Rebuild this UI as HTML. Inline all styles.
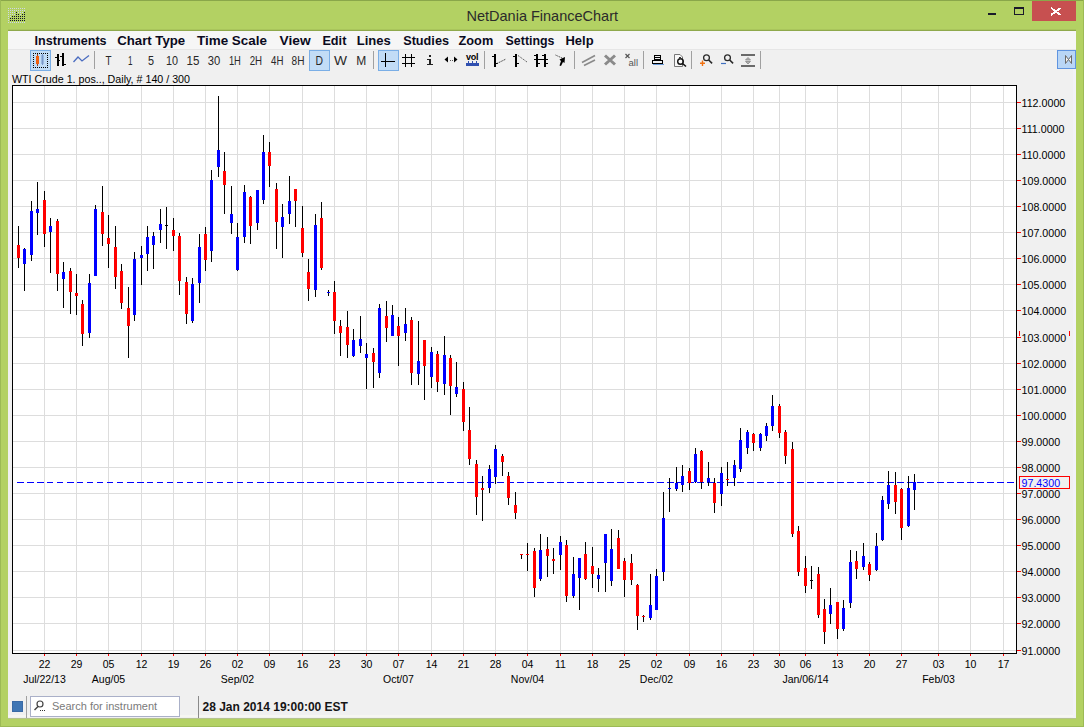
<!DOCTYPE html>
<html><head><meta charset="utf-8"><style>
*{margin:0;padding:0}
html,body{width:1084px;height:727px;overflow:hidden;background:#b3d163}
svg{position:absolute;left:0;top:0;font-family:"Liberation Sans",sans-serif}
</style></head><body>
<svg width="1084" height="727" viewBox="0 0 1084 727">
<g shape-rendering="crispEdges">
<rect x="0" y="0" width="1084" height="727" fill="#b3d163"/>
<rect x="0" y="0" width="1084" height="1" fill="#8aa74a"/>
<rect x="0" y="0" width="1" height="727" fill="#9cba55"/>
<rect x="1083" y="0" width="1" height="727" fill="#9cba55"/>
<rect x="0" y="726" width="1084" height="1" fill="#9cba55"/>
<rect x="8" y="31" width="1068" height="688" fill="#f0f0f0"/>
<rect x="8" y="30" width="1068" height="1" fill="#8fa94c"/>
<rect x="8" y="29" width="1068" height="1" fill="#a9c55c"/>
<rect x="8" y="31" width="1068" height="1" fill="#eef5e0"/>
<rect x="8" y="715" width="1068" height="2" fill="#f6f6f2"/>
<rect x="8" y="718" width="1068" height="1" fill="#b5c28f"/>
<rect x="8" y="31" width="1068" height="18" fill="#f6f6f6"/>
<rect x="8" y="49" width="1068" height="1" fill="#e6e6e6"/>
<rect x="12" y="85" width="1005" height="569" fill="#ffffff"/>
<rect x="13" y="102" width="1003" height="1" fill="#dddddd"/>
<rect x="13" y="128" width="1003" height="1" fill="#dddddd"/>
<rect x="13" y="154" width="1003" height="1" fill="#dddddd"/>
<rect x="13" y="180" width="1003" height="1" fill="#dddddd"/>
<rect x="13" y="206" width="1003" height="1" fill="#dddddd"/>
<rect x="13" y="232" width="1003" height="1" fill="#dddddd"/>
<rect x="13" y="258" width="1003" height="1" fill="#dddddd"/>
<rect x="13" y="284" width="1003" height="1" fill="#dddddd"/>
<rect x="13" y="310" width="1003" height="1" fill="#dddddd"/>
<rect x="13" y="337" width="1003" height="1" fill="#dddddd"/>
<rect x="13" y="363" width="1003" height="1" fill="#dddddd"/>
<rect x="13" y="389" width="1003" height="1" fill="#dddddd"/>
<rect x="13" y="415" width="1003" height="1" fill="#dddddd"/>
<rect x="13" y="441" width="1003" height="1" fill="#dddddd"/>
<rect x="13" y="467" width="1003" height="1" fill="#dddddd"/>
<rect x="13" y="493" width="1003" height="1" fill="#dddddd"/>
<rect x="13" y="519" width="1003" height="1" fill="#dddddd"/>
<rect x="13" y="545" width="1003" height="1" fill="#dddddd"/>
<rect x="13" y="571" width="1003" height="1" fill="#dddddd"/>
<rect x="13" y="597" width="1003" height="1" fill="#dddddd"/>
<rect x="13" y="623" width="1003" height="1" fill="#dddddd"/>
<rect x="13" y="650" width="1003" height="1" fill="#dddddd"/>
<rect x="44" y="86" width="1" height="567" fill="#dddddd"/>
<rect x="76" y="86" width="1" height="567" fill="#dddddd"/>
<rect x="108" y="86" width="1" height="567" fill="#dddddd"/>
<rect x="141" y="86" width="1" height="567" fill="#dddddd"/>
<rect x="173" y="86" width="1" height="567" fill="#dddddd"/>
<rect x="205" y="86" width="1" height="567" fill="#dddddd"/>
<rect x="237" y="86" width="1" height="567" fill="#dddddd"/>
<rect x="269" y="86" width="1" height="567" fill="#dddddd"/>
<rect x="302" y="86" width="1" height="567" fill="#dddddd"/>
<rect x="334" y="86" width="1" height="567" fill="#dddddd"/>
<rect x="366" y="86" width="1" height="567" fill="#dddddd"/>
<rect x="398" y="86" width="1" height="567" fill="#dddddd"/>
<rect x="431" y="86" width="1" height="567" fill="#dddddd"/>
<rect x="463" y="86" width="1" height="567" fill="#dddddd"/>
<rect x="495" y="86" width="1" height="567" fill="#dddddd"/>
<rect x="527" y="86" width="1" height="567" fill="#dddddd"/>
<rect x="560" y="86" width="1" height="567" fill="#dddddd"/>
<rect x="592" y="86" width="1" height="567" fill="#dddddd"/>
<rect x="624" y="86" width="1" height="567" fill="#dddddd"/>
<rect x="656" y="86" width="1" height="567" fill="#dddddd"/>
<rect x="689" y="86" width="1" height="567" fill="#dddddd"/>
<rect x="721" y="86" width="1" height="567" fill="#dddddd"/>
<rect x="753" y="86" width="1" height="567" fill="#dddddd"/>
<rect x="779" y="86" width="1" height="567" fill="#dddddd"/>
<rect x="805" y="86" width="1" height="567" fill="#dddddd"/>
<rect x="837" y="86" width="1" height="567" fill="#dddddd"/>
<rect x="869" y="86" width="1" height="567" fill="#dddddd"/>
<rect x="901" y="86" width="1" height="567" fill="#dddddd"/>
<rect x="938" y="86" width="1" height="567" fill="#dddddd"/>
<rect x="970" y="86" width="1" height="567" fill="#dddddd"/>
<rect x="1003" y="86" width="1" height="567" fill="#dddddd"/>
<rect x="12" y="85" width="1005" height="1" fill="#000"/>
<rect x="12" y="653" width="1005" height="1" fill="#000"/>
<rect x="12" y="85" width="1" height="569" fill="#000"/>
<rect x="1016" y="85" width="1" height="569" fill="#000"/>
<line x1="17" y1="482.5" x2="1016" y2="482.5" stroke="#0000ff" stroke-width="1" stroke-dasharray="6.5,3.5"/>
<rect x="18" y="226" width="1" height="42" fill="#000"/>
<rect x="17" y="245" width="3" height="13" fill="#ff0000"/>
<rect x="24" y="248" width="1" height="43" fill="#000"/>
<rect x="23" y="249" width="3" height="15" fill="#0000ff"/>
<rect x="31" y="201" width="1" height="60" fill="#000"/>
<rect x="30" y="211" width="3" height="44" fill="#0000ff"/>
<rect x="37" y="182" width="1" height="53" fill="#000"/>
<rect x="36" y="209" width="3" height="4" fill="#0000ff"/>
<rect x="44" y="191" width="1" height="56" fill="#000"/>
<rect x="43" y="200" width="3" height="34" fill="#ff0000"/>
<rect x="50" y="218" width="1" height="55" fill="#000"/>
<rect x="49" y="226" width="3" height="6" fill="#0000ff"/>
<rect x="57" y="219" width="1" height="72" fill="#000"/>
<rect x="56" y="221" width="3" height="53" fill="#ff0000"/>
<rect x="63" y="262" width="1" height="46" fill="#000"/>
<rect x="62" y="272" width="3" height="7" fill="#0000ff"/>
<rect x="70" y="268" width="1" height="46" fill="#000"/>
<rect x="69" y="271" width="3" height="21" fill="#ff0000"/>
<rect x="76" y="274" width="1" height="41" fill="#000"/>
<rect x="75" y="293" width="3" height="3" fill="#ff0000"/>
<rect x="82" y="300" width="1" height="46" fill="#000"/>
<rect x="81" y="304" width="3" height="30" fill="#ff0000"/>
<rect x="89" y="274" width="1" height="64" fill="#000"/>
<rect x="88" y="283" width="3" height="50" fill="#0000ff"/>
<rect x="95" y="205" width="1" height="71" fill="#000"/>
<rect x="94" y="209" width="3" height="67" fill="#0000ff"/>
<rect x="102" y="186" width="1" height="60" fill="#000"/>
<rect x="101" y="212" width="3" height="22" fill="#ff0000"/>
<rect x="108" y="215" width="1" height="53" fill="#000"/>
<rect x="107" y="238" width="3" height="6" fill="#ff0000"/>
<rect x="115" y="226" width="1" height="63" fill="#000"/>
<rect x="114" y="247" width="3" height="30" fill="#ff0000"/>
<rect x="121" y="264" width="1" height="45" fill="#000"/>
<rect x="120" y="271" width="3" height="32" fill="#ff0000"/>
<rect x="128" y="287" width="1" height="71" fill="#000"/>
<rect x="127" y="308" width="3" height="18" fill="#ff0000"/>
<rect x="134" y="252" width="1" height="69" fill="#000"/>
<rect x="133" y="259" width="3" height="56" fill="#0000ff"/>
<rect x="141" y="246" width="1" height="39" fill="#000"/>
<rect x="140" y="255" width="3" height="3" fill="#0000ff"/>
<rect x="147" y="226" width="1" height="45" fill="#000"/>
<rect x="146" y="237" width="3" height="17" fill="#0000ff"/>
<rect x="153" y="232" width="1" height="37" fill="#000"/>
<rect x="152" y="236" width="3" height="9" fill="#0000ff"/>
<rect x="160" y="209" width="1" height="34" fill="#000"/>
<rect x="159" y="224" width="3" height="6" fill="#0000ff"/>
<rect x="166" y="207" width="1" height="42" fill="#000"/>
<rect x="165" y="225" width="3" height="1" fill="#000000"/>
<rect x="173" y="218" width="1" height="33" fill="#000"/>
<rect x="172" y="230" width="3" height="6" fill="#ff0000"/>
<rect x="179" y="233" width="1" height="62" fill="#000"/>
<rect x="178" y="236" width="3" height="45" fill="#ff0000"/>
<rect x="186" y="277" width="1" height="47" fill="#000"/>
<rect x="185" y="282" width="3" height="32" fill="#ff0000"/>
<rect x="192" y="278" width="1" height="45" fill="#000"/>
<rect x="191" y="284" width="3" height="37" fill="#0000ff"/>
<rect x="199" y="234" width="1" height="69" fill="#000"/>
<rect x="198" y="247" width="3" height="36" fill="#0000ff"/>
<rect x="205" y="227" width="1" height="44" fill="#000"/>
<rect x="204" y="234" width="3" height="26" fill="#ff0000"/>
<rect x="211" y="170" width="1" height="92" fill="#000"/>
<rect x="210" y="180" width="3" height="71" fill="#0000ff"/>
<rect x="218" y="96" width="1" height="81" fill="#000"/>
<rect x="217" y="150" width="3" height="17" fill="#0000ff"/>
<rect x="224" y="152" width="1" height="62" fill="#000"/>
<rect x="223" y="171" width="3" height="14" fill="#ff0000"/>
<rect x="231" y="186" width="1" height="48" fill="#000"/>
<rect x="230" y="214" width="3" height="9" fill="#0000ff"/>
<rect x="237" y="223" width="1" height="48" fill="#000"/>
<rect x="236" y="237" width="3" height="33" fill="#0000ff"/>
<rect x="244" y="185" width="1" height="58" fill="#000"/>
<rect x="243" y="192" width="3" height="45" fill="#0000ff"/>
<rect x="250" y="196" width="1" height="48" fill="#000"/>
<rect x="249" y="197" width="3" height="29" fill="#ff0000"/>
<rect x="257" y="190" width="1" height="40" fill="#000"/>
<rect x="256" y="190" width="3" height="33" fill="#0000ff"/>
<rect x="263" y="135" width="1" height="69" fill="#000"/>
<rect x="262" y="152" width="3" height="48" fill="#0000ff"/>
<rect x="269" y="142" width="1" height="45" fill="#000"/>
<rect x="268" y="152" width="3" height="14" fill="#ff0000"/>
<rect x="276" y="183" width="1" height="66" fill="#000"/>
<rect x="275" y="189" width="3" height="33" fill="#ff0000"/>
<rect x="282" y="204" width="1" height="54" fill="#000"/>
<rect x="281" y="217" width="3" height="10" fill="#0000ff"/>
<rect x="289" y="176" width="1" height="48" fill="#000"/>
<rect x="288" y="201" width="3" height="13" fill="#0000ff"/>
<rect x="295" y="189" width="1" height="38" fill="#000"/>
<rect x="294" y="189" width="3" height="12" fill="#ff0000"/>
<rect x="302" y="206" width="1" height="51" fill="#000"/>
<rect x="301" y="228" width="3" height="25" fill="#ff0000"/>
<rect x="308" y="259" width="1" height="42" fill="#000"/>
<rect x="307" y="272" width="3" height="17" fill="#ff0000"/>
<rect x="315" y="214" width="1" height="83" fill="#000"/>
<rect x="314" y="225" width="3" height="65" fill="#0000ff"/>
<rect x="321" y="202" width="1" height="68" fill="#000"/>
<rect x="320" y="218" width="3" height="50" fill="#ff0000"/>
<rect x="328" y="290" width="1" height="6" fill="#000"/>
<rect x="327" y="292" width="3" height="1" fill="#0000ff"/>
<rect x="334" y="281" width="1" height="53" fill="#000"/>
<rect x="333" y="292" width="3" height="29" fill="#ff0000"/>
<rect x="340" y="320" width="1" height="36" fill="#000"/>
<rect x="339" y="326" width="3" height="7" fill="#ff0000"/>
<rect x="347" y="311" width="1" height="47" fill="#000"/>
<rect x="346" y="327" width="3" height="18" fill="#ff0000"/>
<rect x="353" y="329" width="1" height="28" fill="#000"/>
<rect x="352" y="340" width="3" height="16" fill="#0000ff"/>
<rect x="360" y="316" width="1" height="37" fill="#000"/>
<rect x="359" y="339" width="3" height="7" fill="#0000ff"/>
<rect x="366" y="343" width="1" height="46" fill="#000"/>
<rect x="365" y="354" width="3" height="4" fill="#0000ff"/>
<rect x="373" y="348" width="1" height="40" fill="#000"/>
<rect x="372" y="353" width="3" height="9" fill="#ff0000"/>
<rect x="379" y="304" width="1" height="74" fill="#000"/>
<rect x="378" y="308" width="3" height="65" fill="#0000ff"/>
<rect x="386" y="301" width="1" height="41" fill="#000"/>
<rect x="385" y="316" width="3" height="12" fill="#ff0000"/>
<rect x="392" y="305" width="1" height="31" fill="#000"/>
<rect x="391" y="315" width="3" height="21" fill="#0000ff"/>
<rect x="398" y="317" width="1" height="49" fill="#000"/>
<rect x="397" y="326" width="3" height="10" fill="#ff0000"/>
<rect x="405" y="308" width="1" height="33" fill="#000"/>
<rect x="404" y="324" width="3" height="9" fill="#0000ff"/>
<rect x="411" y="317" width="1" height="68" fill="#000"/>
<rect x="410" y="320" width="3" height="53" fill="#ff0000"/>
<rect x="418" y="321" width="1" height="64" fill="#000"/>
<rect x="417" y="361" width="3" height="13" fill="#0000ff"/>
<rect x="424" y="340" width="1" height="60" fill="#000"/>
<rect x="423" y="340" width="3" height="26" fill="#ff0000"/>
<rect x="431" y="347" width="1" height="41" fill="#000"/>
<rect x="430" y="352" width="3" height="25" fill="#0000ff"/>
<rect x="437" y="351" width="1" height="41" fill="#000"/>
<rect x="436" y="354" width="3" height="28" fill="#ff0000"/>
<rect x="444" y="336" width="1" height="59" fill="#000"/>
<rect x="443" y="355" width="3" height="29" fill="#0000ff"/>
<rect x="450" y="355" width="1" height="60" fill="#000"/>
<rect x="449" y="358" width="3" height="28" fill="#ff0000"/>
<rect x="456" y="362" width="1" height="35" fill="#000"/>
<rect x="455" y="387" width="3" height="7" fill="#0000ff"/>
<rect x="463" y="382" width="1" height="49" fill="#000"/>
<rect x="462" y="389" width="3" height="33" fill="#ff0000"/>
<rect x="469" y="407" width="1" height="58" fill="#000"/>
<rect x="468" y="430" width="3" height="29" fill="#ff0000"/>
<rect x="476" y="460" width="1" height="55" fill="#000"/>
<rect x="475" y="464" width="3" height="33" fill="#ff0000"/>
<rect x="482" y="476" width="1" height="45" fill="#000"/>
<rect x="481" y="488" width="3" height="2" fill="#ff0000"/>
<rect x="489" y="465" width="1" height="28" fill="#000"/>
<rect x="488" y="469" width="3" height="19" fill="#0000ff"/>
<rect x="495" y="445" width="1" height="39" fill="#000"/>
<rect x="494" y="449" width="3" height="28" fill="#0000ff"/>
<rect x="502" y="454" width="1" height="22" fill="#000"/>
<rect x="501" y="456" width="3" height="6" fill="#ff0000"/>
<rect x="508" y="472" width="1" height="33" fill="#000"/>
<rect x="507" y="476" width="3" height="22" fill="#ff0000"/>
<rect x="515" y="492" width="1" height="27" fill="#000"/>
<rect x="514" y="505" width="3" height="8" fill="#ff0000"/>
<rect x="521" y="554" width="1" height="5" fill="#000"/>
<rect x="520" y="554" width="3" height="1" fill="#ff0000"/>
<rect x="527" y="543" width="1" height="28" fill="#000"/>
<rect x="526" y="554" width="3" height="1" fill="#ff0000"/>
<rect x="534" y="548" width="1" height="49" fill="#000"/>
<rect x="533" y="551" width="3" height="37" fill="#ff0000"/>
<rect x="540" y="534" width="1" height="47" fill="#000"/>
<rect x="539" y="550" width="3" height="29" fill="#0000ff"/>
<rect x="547" y="537" width="1" height="40" fill="#000"/>
<rect x="546" y="549" width="3" height="7" fill="#ff0000"/>
<rect x="553" y="548" width="1" height="26" fill="#000"/>
<rect x="552" y="559" width="3" height="2" fill="#ff0000"/>
<rect x="560" y="536" width="1" height="34" fill="#000"/>
<rect x="559" y="542" width="3" height="13" fill="#0000ff"/>
<rect x="566" y="540" width="1" height="62" fill="#000"/>
<rect x="565" y="545" width="3" height="51" fill="#ff0000"/>
<rect x="573" y="557" width="1" height="41" fill="#000"/>
<rect x="572" y="574" width="3" height="22" fill="#0000ff"/>
<rect x="579" y="558" width="1" height="52" fill="#000"/>
<rect x="578" y="558" width="3" height="20" fill="#0000ff"/>
<rect x="585" y="542" width="1" height="38" fill="#000"/>
<rect x="584" y="554" width="3" height="25" fill="#ff0000"/>
<rect x="592" y="547" width="1" height="41" fill="#000"/>
<rect x="591" y="566" width="3" height="8" fill="#ff0000"/>
<rect x="598" y="568" width="1" height="24" fill="#000"/>
<rect x="597" y="575" width="3" height="4" fill="#0000ff"/>
<rect x="605" y="535" width="1" height="57" fill="#000"/>
<rect x="604" y="534" width="3" height="29" fill="#0000ff"/>
<rect x="611" y="529" width="1" height="57" fill="#000"/>
<rect x="610" y="549" width="3" height="32" fill="#0000ff"/>
<rect x="618" y="530" width="1" height="39" fill="#000"/>
<rect x="617" y="538" width="3" height="31" fill="#ff0000"/>
<rect x="624" y="558" width="1" height="39" fill="#000"/>
<rect x="623" y="561" width="3" height="19" fill="#ff0000"/>
<rect x="631" y="554" width="1" height="31" fill="#000"/>
<rect x="630" y="563" width="3" height="17" fill="#ff0000"/>
<rect x="637" y="584" width="1" height="46" fill="#000"/>
<rect x="636" y="585" width="3" height="31" fill="#ff0000"/>
<rect x="643" y="615" width="1" height="7" fill="#000"/>
<rect x="642" y="616" width="3" height="1" fill="#ff0000"/>
<rect x="650" y="574" width="1" height="46" fill="#000"/>
<rect x="649" y="605" width="3" height="13" fill="#0000ff"/>
<rect x="656" y="569" width="1" height="41" fill="#000"/>
<rect x="655" y="576" width="3" height="34" fill="#0000ff"/>
<rect x="663" y="492" width="1" height="89" fill="#000"/>
<rect x="662" y="518" width="3" height="54" fill="#0000ff"/>
<rect x="669" y="478" width="1" height="34" fill="#000"/>
<rect x="668" y="488" width="3" height="1" fill="#0000ff"/>
<rect x="676" y="467" width="1" height="24" fill="#000"/>
<rect x="675" y="483" width="3" height="6" fill="#0000ff"/>
<rect x="682" y="465" width="1" height="27" fill="#000"/>
<rect x="681" y="476" width="3" height="9" fill="#0000ff"/>
<rect x="689" y="468" width="1" height="22" fill="#000"/>
<rect x="688" y="471" width="3" height="12" fill="#ff0000"/>
<rect x="695" y="448" width="1" height="35" fill="#000"/>
<rect x="694" y="454" width="3" height="28" fill="#0000ff"/>
<rect x="701" y="450" width="1" height="39" fill="#000"/>
<rect x="700" y="451" width="3" height="31" fill="#ff0000"/>
<rect x="708" y="462" width="1" height="24" fill="#000"/>
<rect x="707" y="478" width="3" height="4" fill="#0000ff"/>
<rect x="714" y="478" width="1" height="35" fill="#000"/>
<rect x="713" y="483" width="3" height="20" fill="#ff0000"/>
<rect x="721" y="467" width="1" height="39" fill="#000"/>
<rect x="720" y="473" width="3" height="21" fill="#0000ff"/>
<rect x="727" y="462" width="1" height="24" fill="#000"/>
<rect x="726" y="479" width="3" height="1" fill="#ff0000"/>
<rect x="734" y="460" width="1" height="26" fill="#000"/>
<rect x="733" y="465" width="3" height="13" fill="#0000ff"/>
<rect x="740" y="428" width="1" height="44" fill="#000"/>
<rect x="739" y="440" width="3" height="29" fill="#0000ff"/>
<rect x="747" y="430" width="1" height="24" fill="#000"/>
<rect x="746" y="432" width="3" height="16" fill="#0000ff"/>
<rect x="753" y="433" width="1" height="18" fill="#000"/>
<rect x="752" y="434" width="3" height="9" fill="#ff0000"/>
<rect x="760" y="433" width="1" height="18" fill="#000"/>
<rect x="759" y="434" width="3" height="14" fill="#0000ff"/>
<rect x="766" y="423" width="1" height="18" fill="#000"/>
<rect x="765" y="426" width="3" height="10" fill="#0000ff"/>
<rect x="772" y="395" width="1" height="36" fill="#000"/>
<rect x="771" y="406" width="3" height="20" fill="#0000ff"/>
<rect x="779" y="404" width="1" height="34" fill="#000"/>
<rect x="778" y="406" width="3" height="27" fill="#ff0000"/>
<rect x="785" y="430" width="1" height="34" fill="#000"/>
<rect x="784" y="432" width="3" height="24" fill="#ff0000"/>
<rect x="792" y="442" width="1" height="95" fill="#000"/>
<rect x="791" y="449" width="3" height="85" fill="#ff0000"/>
<rect x="798" y="526" width="1" height="50" fill="#000"/>
<rect x="797" y="531" width="3" height="41" fill="#ff0000"/>
<rect x="805" y="556" width="1" height="37" fill="#000"/>
<rect x="804" y="568" width="3" height="18" fill="#ff0000"/>
<rect x="811" y="566" width="1" height="23" fill="#000"/>
<rect x="810" y="580" width="3" height="1" fill="#000000"/>
<rect x="818" y="567" width="1" height="51" fill="#000"/>
<rect x="817" y="574" width="3" height="41" fill="#ff0000"/>
<rect x="824" y="599" width="1" height="45" fill="#000"/>
<rect x="823" y="609" width="3" height="23" fill="#ff0000"/>
<rect x="830" y="588" width="1" height="36" fill="#000"/>
<rect x="829" y="605" width="3" height="9" fill="#0000ff"/>
<rect x="837" y="602" width="1" height="37" fill="#000"/>
<rect x="836" y="602" width="3" height="27" fill="#ff0000"/>
<rect x="843" y="600" width="1" height="31" fill="#000"/>
<rect x="842" y="608" width="3" height="21" fill="#0000ff"/>
<rect x="850" y="550" width="1" height="58" fill="#000"/>
<rect x="849" y="562" width="3" height="41" fill="#0000ff"/>
<rect x="856" y="551" width="1" height="28" fill="#000"/>
<rect x="855" y="561" width="3" height="8" fill="#ff0000"/>
<rect x="863" y="543" width="1" height="27" fill="#000"/>
<rect x="862" y="556" width="3" height="11" fill="#0000ff"/>
<rect x="869" y="562" width="1" height="19" fill="#000"/>
<rect x="868" y="564" width="3" height="11" fill="#ff0000"/>
<rect x="876" y="533" width="1" height="38" fill="#000"/>
<rect x="875" y="546" width="3" height="24" fill="#0000ff"/>
<rect x="882" y="496" width="1" height="45" fill="#000"/>
<rect x="881" y="500" width="3" height="40" fill="#0000ff"/>
<rect x="888" y="471" width="1" height="38" fill="#000"/>
<rect x="887" y="485" width="3" height="19" fill="#0000ff"/>
<rect x="895" y="472" width="1" height="42" fill="#000"/>
<rect x="894" y="485" width="3" height="17" fill="#ff0000"/>
<rect x="901" y="488" width="1" height="52" fill="#000"/>
<rect x="900" y="489" width="3" height="39" fill="#ff0000"/>
<rect x="908" y="476" width="1" height="51" fill="#000"/>
<rect x="907" y="488" width="3" height="38" fill="#0000ff"/>
<rect x="914" y="474" width="1" height="36" fill="#000"/>
<rect x="913" y="482" width="3" height="8" fill="#0000ff"/>
<rect x="1017" y="102" width="4" height="1" fill="#ff0000"/>
<text x="1021.5" y="107" font-size="10.7" fill="#000">112.0000</text>
<rect x="1017" y="128" width="4" height="1" fill="#ff0000"/>
<text x="1021.5" y="133" font-size="10.7" fill="#000">111.0000</text>
<rect x="1017" y="154" width="4" height="1" fill="#ff0000"/>
<text x="1021.5" y="159" font-size="10.7" fill="#000">110.0000</text>
<rect x="1017" y="180" width="4" height="1" fill="#ff0000"/>
<text x="1021.5" y="185" font-size="10.7" fill="#000">109.0000</text>
<rect x="1017" y="206" width="4" height="1" fill="#ff0000"/>
<text x="1021.5" y="211" font-size="10.7" fill="#000">108.0000</text>
<rect x="1017" y="232" width="4" height="1" fill="#ff0000"/>
<text x="1021.5" y="237" font-size="10.7" fill="#000">107.0000</text>
<rect x="1017" y="258" width="4" height="1" fill="#ff0000"/>
<text x="1021.5" y="263" font-size="10.7" fill="#000">106.0000</text>
<rect x="1017" y="284" width="4" height="1" fill="#ff0000"/>
<text x="1021.5" y="289" font-size="10.7" fill="#000">105.0000</text>
<rect x="1017" y="310" width="4" height="1" fill="#ff0000"/>
<text x="1021.5" y="315" font-size="10.7" fill="#000">104.0000</text>
<rect x="1017" y="337" width="4" height="1" fill="#ff0000"/>
<text x="1021.5" y="342" font-size="10.7" fill="#000">103.0000</text>
<rect x="1017" y="363" width="4" height="1" fill="#ff0000"/>
<text x="1021.5" y="368" font-size="10.7" fill="#000">102.0000</text>
<rect x="1017" y="389" width="4" height="1" fill="#ff0000"/>
<text x="1021.5" y="394" font-size="10.7" fill="#000">101.0000</text>
<rect x="1017" y="415" width="4" height="1" fill="#ff0000"/>
<text x="1021.5" y="420" font-size="10.7" fill="#000">100.0000</text>
<rect x="1017" y="441" width="4" height="1" fill="#ff0000"/>
<text x="1021.5" y="446" font-size="10.7" fill="#000">99.0000</text>
<rect x="1017" y="467" width="4" height="1" fill="#ff0000"/>
<text x="1021.5" y="472" font-size="10.7" fill="#000">98.0000</text>
<rect x="1017" y="493" width="4" height="1" fill="#ff0000"/>
<text x="1021.5" y="498" font-size="10.7" fill="#000">97.0000</text>
<rect x="1017" y="519" width="4" height="1" fill="#ff0000"/>
<text x="1021.5" y="524" font-size="10.7" fill="#000">96.0000</text>
<rect x="1017" y="545" width="4" height="1" fill="#ff0000"/>
<text x="1021.5" y="550" font-size="10.7" fill="#000">95.0000</text>
<rect x="1017" y="571" width="4" height="1" fill="#ff0000"/>
<text x="1021.5" y="576" font-size="10.7" fill="#000">94.0000</text>
<rect x="1017" y="597" width="4" height="1" fill="#ff0000"/>
<text x="1021.5" y="602" font-size="10.7" fill="#000">93.0000</text>
<rect x="1017" y="623" width="4" height="1" fill="#ff0000"/>
<text x="1021.5" y="628" font-size="10.7" fill="#000">92.0000</text>
<rect x="1017" y="650" width="4" height="1" fill="#ff0000"/>
<text x="1021.5" y="655" font-size="10.7" fill="#000">91.0000</text>
<rect x="1069" y="331" width="1" height="5" fill="#ff0000"/>
<rect x="1019" y="331" width="1" height="5" fill="#ff0000"/>
<rect x="1073" y="50" width="3" height="668" fill="#f2f2f6"/>
<rect x="1019.5" y="476.5" width="50" height="12" fill="#f0f0f0" stroke="#ff0000" stroke-width="1"/>
<text x="1021.5" y="486.5" font-size="10.7" fill="#0000ff">97.4300</text>
<rect x="44" y="654" width="1" height="2" fill="#ff0000"/>
<text x="44.5" y="668" font-size="10.5" fill="#000" text-anchor="middle">22</text>
<rect x="76" y="654" width="1" height="2" fill="#ff0000"/>
<text x="76.5" y="668" font-size="10.5" fill="#000" text-anchor="middle">29</text>
<rect x="108" y="654" width="1" height="2" fill="#ff0000"/>
<text x="108.5" y="668" font-size="10.5" fill="#000" text-anchor="middle">05</text>
<rect x="141" y="654" width="1" height="2" fill="#ff0000"/>
<text x="141.5" y="668" font-size="10.5" fill="#000" text-anchor="middle">12</text>
<rect x="173" y="654" width="1" height="2" fill="#ff0000"/>
<text x="173.5" y="668" font-size="10.5" fill="#000" text-anchor="middle">19</text>
<rect x="205" y="654" width="1" height="2" fill="#ff0000"/>
<text x="205.5" y="668" font-size="10.5" fill="#000" text-anchor="middle">26</text>
<rect x="237" y="654" width="1" height="2" fill="#ff0000"/>
<text x="237.5" y="668" font-size="10.5" fill="#000" text-anchor="middle">02</text>
<rect x="269" y="654" width="1" height="2" fill="#ff0000"/>
<text x="269.5" y="668" font-size="10.5" fill="#000" text-anchor="middle">09</text>
<rect x="302" y="654" width="1" height="2" fill="#ff0000"/>
<text x="302.5" y="668" font-size="10.5" fill="#000" text-anchor="middle">16</text>
<rect x="334" y="654" width="1" height="2" fill="#ff0000"/>
<text x="334.5" y="668" font-size="10.5" fill="#000" text-anchor="middle">23</text>
<rect x="366" y="654" width="1" height="2" fill="#ff0000"/>
<text x="366.5" y="668" font-size="10.5" fill="#000" text-anchor="middle">30</text>
<rect x="398" y="654" width="1" height="2" fill="#ff0000"/>
<text x="398.5" y="668" font-size="10.5" fill="#000" text-anchor="middle">07</text>
<rect x="431" y="654" width="1" height="2" fill="#ff0000"/>
<text x="431.5" y="668" font-size="10.5" fill="#000" text-anchor="middle">14</text>
<rect x="463" y="654" width="1" height="2" fill="#ff0000"/>
<text x="463.5" y="668" font-size="10.5" fill="#000" text-anchor="middle">21</text>
<rect x="495" y="654" width="1" height="2" fill="#ff0000"/>
<text x="495.5" y="668" font-size="10.5" fill="#000" text-anchor="middle">28</text>
<rect x="527" y="654" width="1" height="2" fill="#ff0000"/>
<text x="527.5" y="668" font-size="10.5" fill="#000" text-anchor="middle">04</text>
<rect x="560" y="654" width="1" height="2" fill="#ff0000"/>
<text x="560.5" y="668" font-size="10.5" fill="#000" text-anchor="middle">11</text>
<rect x="592" y="654" width="1" height="2" fill="#ff0000"/>
<text x="592.5" y="668" font-size="10.5" fill="#000" text-anchor="middle">18</text>
<rect x="624" y="654" width="1" height="2" fill="#ff0000"/>
<text x="624.5" y="668" font-size="10.5" fill="#000" text-anchor="middle">25</text>
<rect x="656" y="654" width="1" height="2" fill="#ff0000"/>
<text x="656.5" y="668" font-size="10.5" fill="#000" text-anchor="middle">02</text>
<rect x="689" y="654" width="1" height="2" fill="#ff0000"/>
<text x="689.5" y="668" font-size="10.5" fill="#000" text-anchor="middle">09</text>
<rect x="721" y="654" width="1" height="2" fill="#ff0000"/>
<text x="721.5" y="668" font-size="10.5" fill="#000" text-anchor="middle">16</text>
<rect x="753" y="654" width="1" height="2" fill="#ff0000"/>
<text x="753.5" y="668" font-size="10.5" fill="#000" text-anchor="middle">23</text>
<rect x="779" y="654" width="1" height="2" fill="#ff0000"/>
<text x="779.5" y="668" font-size="10.5" fill="#000" text-anchor="middle">30</text>
<rect x="805" y="654" width="1" height="2" fill="#ff0000"/>
<text x="805.5" y="668" font-size="10.5" fill="#000" text-anchor="middle">06</text>
<rect x="837" y="654" width="1" height="2" fill="#ff0000"/>
<text x="837.5" y="668" font-size="10.5" fill="#000" text-anchor="middle">13</text>
<rect x="869" y="654" width="1" height="2" fill="#ff0000"/>
<text x="869.5" y="668" font-size="10.5" fill="#000" text-anchor="middle">20</text>
<rect x="901" y="654" width="1" height="2" fill="#ff0000"/>
<text x="901.5" y="668" font-size="10.5" fill="#000" text-anchor="middle">27</text>
<rect x="938" y="654" width="1" height="2" fill="#ff0000"/>
<text x="938.5" y="668" font-size="10.5" fill="#000" text-anchor="middle">03</text>
<rect x="970" y="654" width="1" height="2" fill="#ff0000"/>
<text x="970.5" y="668" font-size="10.5" fill="#000" text-anchor="middle">10</text>
<rect x="1003" y="654" width="1" height="2" fill="#ff0000"/>
<text x="1003.5" y="668" font-size="10.5" fill="#000" text-anchor="middle">17</text>
<text x="44.5" y="683" font-size="10.5" fill="#000" text-anchor="middle">Jul/22/13</text>
<text x="108.5" y="683" font-size="10.5" fill="#000" text-anchor="middle">Aug/05</text>
<text x="237.5" y="683" font-size="10.5" fill="#000" text-anchor="middle">Sep/02</text>
<text x="398.5" y="683" font-size="10.5" fill="#000" text-anchor="middle">Oct/07</text>
<text x="527.5" y="683" font-size="10.5" fill="#000" text-anchor="middle">Nov/04</text>
<text x="656.5" y="683" font-size="10.5" fill="#000" text-anchor="middle">Dec/02</text>
<text x="805.5" y="683" font-size="10.5" fill="#000" text-anchor="middle">Jan/06/14</text>
<text x="938.5" y="683" font-size="10.5" fill="#000" text-anchor="middle">Feb/03</text>
<text x="12" y="82.5" font-size="10.7" fill="#000">WTI Crude 1. pos.., Daily, # 140 / 300</text>
<text x="466.5" y="20.5" font-size="14.5" fill="#2b2b2b">NetDania FinanceChart</text>
<rect x="988" y="13" width="8" height="2" fill="#1a1a2a"/>
<rect x="1014.5" y="7.5" width="9" height="7" fill="none" stroke="#1a1a2a" stroke-width="1"/>
<rect x="1014" y="7" width="10" height="2" fill="#1a1a2a"/>
<rect x="1032" y="1" width="44" height="20" fill="#c75050"/>
<path d="M1051 8 L1060.5 15 M1060.5 8 L1051 15" stroke="#fff" stroke-width="1.8"/>
<text x="34.6" y="45" font-size="12.7" font-weight="bold" fill="#0a0a20" textLength="72" lengthAdjust="spacingAndGlyphs">Instruments</text>
<text x="117.2" y="45" font-size="12.7" font-weight="bold" fill="#0a0a20" textLength="68" lengthAdjust="spacingAndGlyphs">Chart Type</text>
<text x="197" y="45" font-size="12.7" font-weight="bold" fill="#0a0a20" textLength="70" lengthAdjust="spacingAndGlyphs">Time Scale</text>
<text x="279.6" y="45" font-size="12.7" font-weight="bold" fill="#0a0a20" textLength="31" lengthAdjust="spacingAndGlyphs">View</text>
<text x="322.4" y="45" font-size="12.7" font-weight="bold" fill="#0a0a20" textLength="24" lengthAdjust="spacingAndGlyphs">Edit</text>
<text x="356.8" y="45" font-size="12.7" font-weight="bold" fill="#0a0a20" textLength="34" lengthAdjust="spacingAndGlyphs">Lines</text>
<text x="403.2" y="45" font-size="12.7" font-weight="bold" fill="#0a0a20" textLength="45.8" lengthAdjust="spacingAndGlyphs">Studies</text>
<text x="458.6" y="45" font-size="12.7" font-weight="bold" fill="#0a0a20" textLength="34.6" lengthAdjust="spacingAndGlyphs">Zoom</text>
<text x="505.6" y="45" font-size="12.7" font-weight="bold" fill="#0a0a20" textLength="48.9" lengthAdjust="spacingAndGlyphs">Settings</text>
<text x="565.5" y="45" font-size="12.7" font-weight="bold" fill="#0a0a20" textLength="28.1" lengthAdjust="spacingAndGlyphs">Help</text>
<rect x="30.5" y="50.5" width="20" height="20" fill="#c2dcf6" stroke="#7aaee6" stroke-width="1"/>
<rect x="309.5" y="50.5" width="20" height="20" fill="#c2dcf6" stroke="#7aaee6" stroke-width="1"/>
<rect x="378.5" y="50.5" width="20" height="20" fill="#c2dcf6" stroke="#7aaee6" stroke-width="1"/>
<rect x="1057.5" y="50.5" width="18" height="18" fill="#b9d6f6" stroke="#5f94e0" stroke-width="1"/>
<text x="105.5" y="64.5" font-size="12.3" fill="#282828" textLength="6" lengthAdjust="spacingAndGlyphs">T</text>
<text x="128" y="64.5" font-size="12.3" fill="#282828" textLength="4.5" lengthAdjust="spacingAndGlyphs">1</text>
<text x="148" y="64.5" font-size="12.3" fill="#282828" textLength="6" lengthAdjust="spacingAndGlyphs">5</text>
<text x="166" y="64.5" font-size="12.3" fill="#282828" textLength="12" lengthAdjust="spacingAndGlyphs">10</text>
<text x="186.5" y="64.5" font-size="12.3" fill="#282828" textLength="12.9" lengthAdjust="spacingAndGlyphs">15</text>
<text x="207.7" y="64.5" font-size="12.3" fill="#282828" textLength="12.5" lengthAdjust="spacingAndGlyphs">30</text>
<text x="228.9" y="64.5" font-size="12.3" fill="#282828" textLength="12" lengthAdjust="spacingAndGlyphs">1H</text>
<text x="249.7" y="64.5" font-size="12.3" fill="#282828" textLength="12.4" lengthAdjust="spacingAndGlyphs">2H</text>
<text x="271" y="64.5" font-size="12.3" fill="#282828" textLength="12.4" lengthAdjust="spacingAndGlyphs">4H</text>
<text x="291.6" y="64.5" font-size="12.3" fill="#282828" textLength="12.9" lengthAdjust="spacingAndGlyphs">8H</text>
<text x="315.6" y="64.5" font-size="12.3" fill="#282828" textLength="7.5" lengthAdjust="spacingAndGlyphs">D</text>
<text x="334" y="64.5" font-size="12.3" fill="#282828" textLength="13" lengthAdjust="spacingAndGlyphs">W</text>
<text x="356.2" y="64.5" font-size="12.3" fill="#282828" textLength="10" lengthAdjust="spacingAndGlyphs">M</text>
<rect x="94" y="51" width="1" height="18" fill="#a0a0a0"/>
<rect x="373" y="51" width="1" height="18" fill="#a0a0a0"/>
<rect x="484" y="51" width="1" height="18" fill="#a0a0a0"/>
<rect x="574" y="51" width="1" height="18" fill="#a0a0a0"/>
<rect x="643" y="51" width="1" height="18" fill="#a0a0a0"/>
<rect x="691" y="51" width="1" height="18" fill="#a0a0a0"/>
<rect x="760" y="51" width="1" height="18" fill="#a0a0a0"/>
<rect x="26" y="696" width="1" height="22" fill="#a0a0a0"/>
<rect x="30.5" y="696.5" width="149" height="20" fill="#fff" stroke="#aab0c8" stroke-width="1"/>
<text x="52" y="709.5" font-size="11" fill="#7a7a7a">Search for instrument</text>
<rect x="198" y="696" width="1" height="22" fill="#8a8a8a"/>
<text x="202.5" y="711" font-size="12" font-weight="bold" fill="#151515">28 Jan 2014 19:00:00 EST</text>
<rect x="33" y="53" width="1" height="1" fill="#000"/>
<rect x="33" y="67" width="1" height="1" fill="#000"/>
<rect x="35" y="53" width="1" height="1" fill="#000"/>
<rect x="35" y="67" width="1" height="1" fill="#000"/>
<rect x="37" y="53" width="1" height="1" fill="#000"/>
<rect x="37" y="67" width="1" height="1" fill="#000"/>
<rect x="39" y="53" width="1" height="1" fill="#000"/>
<rect x="39" y="67" width="1" height="1" fill="#000"/>
<rect x="41" y="53" width="1" height="1" fill="#000"/>
<rect x="41" y="67" width="1" height="1" fill="#000"/>
<rect x="43" y="53" width="1" height="1" fill="#000"/>
<rect x="43" y="67" width="1" height="1" fill="#000"/>
<rect x="45" y="53" width="1" height="1" fill="#000"/>
<rect x="45" y="67" width="1" height="1" fill="#000"/>
<rect x="47" y="53" width="1" height="1" fill="#000"/>
<rect x="47" y="67" width="1" height="1" fill="#000"/>
<rect x="33" y="53" width="1" height="1" fill="#000"/>
<rect x="47" y="53" width="1" height="1" fill="#000"/>
<rect x="33" y="55" width="1" height="1" fill="#000"/>
<rect x="47" y="55" width="1" height="1" fill="#000"/>
<rect x="33" y="57" width="1" height="1" fill="#000"/>
<rect x="47" y="57" width="1" height="1" fill="#000"/>
<rect x="33" y="59" width="1" height="1" fill="#000"/>
<rect x="47" y="59" width="1" height="1" fill="#000"/>
<rect x="33" y="61" width="1" height="1" fill="#000"/>
<rect x="47" y="61" width="1" height="1" fill="#000"/>
<rect x="33" y="63" width="1" height="1" fill="#000"/>
<rect x="47" y="63" width="1" height="1" fill="#000"/>
<rect x="33" y="65" width="1" height="1" fill="#000"/>
<rect x="47" y="65" width="1" height="1" fill="#000"/>
<rect x="33" y="67" width="1" height="1" fill="#000"/>
<rect x="47" y="67" width="1" height="1" fill="#000"/>
<rect x="37" y="54" width="1" height="12" fill="#a04020"/>
<rect x="36" y="56" width="3" height="8" fill="#f06010"/>
<rect x="41" y="55" width="3" height="9" fill="#9ab8e0"/>
<rect x="42" y="54" width="1" height="11" fill="#7a98c8"/>
<rect x="57" y="54" width="2" height="12" fill="#000"/>
<rect x="55" y="57" width="2" height="1" fill="#000"/>
<rect x="59" y="60" width="1" height="1" fill="#000"/>
<rect x="62" y="53" width="2" height="13" fill="#000"/>
<rect x="60" y="56" width="2" height="1" fill="#000"/>
<rect x="64" y="64" width="2" height="1" fill="#000"/>
</g><g>
<polyline points="73.5,62 78,57 82,61 89,55.5" fill="none" stroke="#4a6cc0" stroke-width="1.3"/>
</g><g shape-rendering="crispEdges">
<rect x="385" y="53" width="1" height="14" fill="#000"/>
<rect x="381" y="61" width="14" height="1" fill="#000"/>
<rect x="405" y="54" width="1" height="13" fill="#000"/>
<rect x="411" y="54" width="1" height="13" fill="#000"/>
<rect x="402" y="57" width="13" height="1" fill="#000"/>
<rect x="402" y="63" width="13" height="1" fill="#000"/>
<rect x="429" y="55" width="2" height="2" fill="#222"/>
<rect x="429" y="59" width="2" height="6" fill="#222"/>
<rect x="427" y="59" width="2" height="1" fill="#222"/>
<rect x="427" y="64" width="6" height="1" fill="#222"/>
</g><g>
<path d="M444.5 59.5 L448 56.5 L448 62.5 Z" fill="#000"/>
<path d="M457.5 59.5 L454 56.5 L454 62.5 Z" fill="#000"/>
<rect x="450" y="60" width="1" height="1" fill="#555"/><rect x="452" y="60" width="1" height="1" fill="#555"/>
<text x="466" y="59.5" font-size="9" font-weight="bold" fill="#000" textLength="12.5">vol</text>
</g><g shape-rendering="crispEdges">
<rect x="466" y="63" width="13" height="3" fill="#3050b0"/>
<rect x="468" y="61" width="1" height="2" fill="#3050b0"/><rect x="472" y="61" width="1" height="2" fill="#3050b0"/><rect x="476" y="61" width="1" height="2" fill="#3050b0"/>
<rect x="494" y="54" width="2" height="13" fill="#000"/>
<rect x="492" y="56" width="2" height="1" fill="#000"/>
<rect x="496" y="63" width="2" height="1" fill="#000"/>
<rect x="515" y="54" width="2" height="13" fill="#000"/>
<rect x="513" y="56" width="2" height="1" fill="#000"/>
<rect x="517" y="63" width="2" height="1" fill="#000"/>
</g><g>
<line x1="497" y1="63.5" x2="506" y2="59" stroke="#333" stroke-width="1" stroke-dasharray="1.2,0.8"/>
<line x1="518" y1="55.5" x2="527" y2="62" stroke="#555" stroke-width="1" stroke-dasharray="1.2,0.8"/>
</g><g shape-rendering="crispEdges">
<rect x="536" y="54" width="2" height="13" fill="#000"/>
<rect x="544" y="54" width="2" height="13" fill="#000"/>
<rect x="534" y="59" width="14" height="1" fill="#000"/>
<rect x="538" y="63" width="2" height="1" fill="#000"/><rect x="546" y="63" width="2" height="1" fill="#000"/>
<rect x="534" y="55" width="2" height="1" fill="#000"/><rect x="542" y="55" width="2" height="1" fill="#000"/>
</g><g>
<line x1="555.5" y1="55" x2="563" y2="58.5" stroke="#444" stroke-width="1" stroke-dasharray="1.2,0.8"/>
<path d="M565 57 L559.5 59.5 L561 61 L559.5 65.5 L561 66 L563 62 L564.5 63 Z" fill="#000"/>
<line x1="582" y1="62.5" x2="595" y2="55.5" stroke="#8a8a8a" stroke-width="1.6"/>
<line x1="584" y1="65.5" x2="595" y2="60" stroke="#8a8a8a" stroke-width="1.6"/>
<path d="M605 55.5 L615 64.5 M615 55.5 L605 64.5" stroke="#8a8a8a" stroke-width="3"/>
<path d="M625.5 54 L629.5 58 M629.5 54 L625.5 58" stroke="#555" stroke-width="1.2"/>
<text x="628.5" y="66" font-size="9.5" fill="#555">all</text>
</g><g shape-rendering="crispEdges">
<rect x="654" y="55" width="7" height="1" fill="#000"/><rect x="654" y="55" width="1" height="6" fill="#000"/><rect x="660" y="55" width="1" height="6" fill="#000"/>
<rect x="655" y="57" width="5" height="1" fill="#000"/><rect x="655" y="59" width="5" height="1" fill="#000"/>
<rect x="652" y="60" width="11" height="1" fill="#000"/><rect x="652" y="60" width="1" height="4" fill="#000"/><rect x="662" y="60" width="1" height="4" fill="#000"/><rect x="652" y="63" width="11" height="1" fill="#000"/>
<rect x="653" y="64" width="11" height="1" fill="#6a9ad8"/>
</g><g>
<path d="M674.5 54.5 H680 L682.5 57 V66.5 H674.5 Z" fill="#f8f8f8" stroke="#777" stroke-width="1"/>
<circle cx="680.5" cy="61.5" r="2.8" fill="none" stroke="#111" stroke-width="1.4"/>
<line x1="682.5" y1="63.5" x2="686" y2="66.5" stroke="#111" stroke-width="1.6"/>
<rect x="679" y="57" width="2" height="2" fill="#333"/>
<circle cx="706.5" cy="57.8" r="2.9" fill="none" stroke="#2a2a2a" stroke-width="1.3"/>
<line x1="708.7" y1="60" x2="712.1" y2="63.4" stroke="#2a2a2a" stroke-width="1.6"/>
<circle cx="727.5" cy="57.8" r="2.9" fill="none" stroke="#2a2a2a" stroke-width="1.3"/>
<line x1="729.7" y1="60" x2="733.1" y2="63.4" stroke="#2a2a2a" stroke-width="1.6"/>
<path d="M702.5 60.5 V66 M700 63.2 H705" stroke="#f07010" stroke-width="1.4"/>
<path d="M721 63.5 H726" stroke="#4070c0" stroke-width="1.2"/>
<rect x="741" y="54" width="14" height="2" fill="#6a6a6a"/>
<rect x="741" y="65" width="14" height="2" fill="#6a6a6a"/>
<path d="M745.5 60 L748 57.5 L750.5 60 Z M745.5 61.5 L748 64 L750.5 61.5 Z" fill="#b0b0b0" stroke="#8a8a8a" stroke-width="0.8"/>
<path d="M1065.5 55.5 L1068.5 59.5 L1071.5 55.5 L1071.5 63.5 L1068.5 59.5 L1065.5 63.5 Z" fill="#f4f4f4" stroke="#6a6a6a" stroke-width="1"/>
</g><g shape-rendering="crispEdges">
<rect x="8" y="8" width="1" height="1" fill="#cdd8e8"/>
<rect x="10" y="8" width="1" height="1" fill="#cdd8e8"/>
<rect x="12" y="8" width="1" height="1" fill="#cdd8e8"/>
<rect x="14" y="8" width="1" height="1" fill="#cdd8e8"/>
<rect x="16" y="8" width="1" height="1" fill="#cdd8e8"/>
<rect x="18" y="8" width="1" height="1" fill="#cdd8e8"/>
<rect x="20" y="8" width="1" height="1" fill="#cdd8e8"/>
<rect x="22" y="8" width="1" height="1" fill="#cdd8e8"/>
<rect x="24" y="8" width="1" height="1" fill="#cdd8e8"/>
<rect x="8" y="10" width="1" height="1" fill="#cdd8e8"/>
<rect x="10" y="10" width="1" height="1" fill="#cdd8e8"/>
<rect x="12" y="10" width="1" height="1" fill="#cdd8e8"/>
<rect x="14" y="10" width="1" height="1" fill="#cdd8e8"/>
<rect x="16" y="10" width="1" height="1" fill="#cdd8e8"/>
<rect x="18" y="10" width="1" height="1" fill="#cdd8e8"/>
<rect x="20" y="10" width="1" height="1" fill="#cdd8e8"/>
<rect x="22" y="10" width="1" height="1" fill="#cdd8e8"/>
<rect x="24" y="10" width="1" height="1" fill="#cdd8e8"/>
<rect x="8" y="12" width="1" height="1" fill="#cdd8e8"/>
<rect x="10" y="12" width="1" height="1" fill="#cdd8e8"/>
<rect x="12" y="12" width="1" height="1" fill="#cdd8e8"/>
<rect x="14" y="12" width="1" height="1" fill="#cdd8e8"/>
<rect x="16" y="12" width="1" height="1" fill="#0d1428"/>
<rect x="18" y="12" width="1" height="1" fill="#cdd8e8"/>
<rect x="20" y="12" width="1" height="1" fill="#cdd8e8"/>
<rect x="22" y="12" width="1" height="1" fill="#cdd8e8"/>
<rect x="24" y="12" width="1" height="1" fill="#0d1428"/>
<rect x="8" y="14" width="1" height="1" fill="#cdd8e8"/>
<rect x="10" y="14" width="1" height="1" fill="#cdd8e8"/>
<rect x="12" y="14" width="1" height="1" fill="#cdd8e8"/>
<rect x="14" y="14" width="1" height="1" fill="#cdd8e8"/>
<rect x="16" y="14" width="1" height="1" fill="#0d1428"/>
<rect x="18" y="14" width="1" height="1" fill="#0d1428"/>
<rect x="20" y="14" width="1" height="1" fill="#cdd8e8"/>
<rect x="22" y="14" width="1" height="1" fill="#0d1428"/>
<rect x="24" y="14" width="1" height="1" fill="#0d1428"/>
<rect x="8" y="16" width="1" height="1" fill="#cdd8e8"/>
<rect x="10" y="16" width="1" height="1" fill="#cdd8e8"/>
<rect x="12" y="16" width="1" height="1" fill="#0d1428"/>
<rect x="14" y="16" width="1" height="1" fill="#0d1428"/>
<rect x="16" y="16" width="1" height="1" fill="#0d1428"/>
<rect x="18" y="16" width="1" height="1" fill="#0d1428"/>
<rect x="20" y="16" width="1" height="1" fill="#0d1428"/>
<rect x="22" y="16" width="1" height="1" fill="#0d1428"/>
<rect x="24" y="16" width="1" height="1" fill="#0d1428"/>
<rect x="8" y="18" width="1" height="1" fill="#cdd8e8"/>
<rect x="10" y="18" width="1" height="1" fill="#0d1428"/>
<rect x="12" y="18" width="1" height="1" fill="#0d1428"/>
<rect x="14" y="18" width="1" height="1" fill="#0d1428"/>
<rect x="16" y="18" width="1" height="1" fill="#0d1428"/>
<rect x="18" y="18" width="1" height="1" fill="#0d1428"/>
<rect x="20" y="18" width="1" height="1" fill="#0d1428"/>
<rect x="22" y="18" width="1" height="1" fill="#0d1428"/>
<rect x="24" y="18" width="1" height="1" fill="#0d1428"/>
<rect x="8" y="20" width="1" height="1" fill="#cdd8e8"/>
<rect x="10" y="20" width="1" height="1" fill="#0d1428"/>
<rect x="12" y="20" width="1" height="1" fill="#0d1428"/>
<rect x="14" y="20" width="1" height="1" fill="#0d1428"/>
<rect x="16" y="20" width="1" height="1" fill="#0d1428"/>
<rect x="18" y="20" width="1" height="1" fill="#0d1428"/>
<rect x="20" y="20" width="1" height="1" fill="#0d1428"/>
<rect x="22" y="20" width="1" height="1" fill="#0d1428"/>
<rect x="24" y="20" width="1" height="1" fill="#0d1428"/>
<rect x="8" y="22" width="1" height="1" fill="#cdd8e8"/>
<rect x="10" y="22" width="1" height="1" fill="#cdd8e8"/>
<rect x="12" y="22" width="1" height="1" fill="#cdd8e8"/>
<rect x="14" y="22" width="1" height="1" fill="#cdd8e8"/>
<rect x="16" y="22" width="1" height="1" fill="#cdd8e8"/>
<rect x="18" y="22" width="1" height="1" fill="#cdd8e8"/>
<rect x="20" y="22" width="1" height="1" fill="#cdd8e8"/>
<rect x="22" y="22" width="1" height="1" fill="#cdd8e8"/>
<rect x="24" y="22" width="1" height="1" fill="#cdd8e8"/>
<rect x="12" y="701" width="11" height="11" fill="#3a6aa6"/>
<rect x="13" y="702" width="9" height="9" fill="#4076b4"/>
</g><g>
<circle cx="40" cy="704" r="3" fill="none" stroke="#444" stroke-width="1.2"/>
<line x1="38" y1="706.5" x2="34.5" y2="710" stroke="#444" stroke-width="1.4"/>
<rect x="40" y="710" width="1" height="1" fill="#333"/><rect x="42" y="710" width="1" height="1" fill="#333"/><rect x="44" y="710" width="1" height="1" fill="#333"/>
</g><g shape-rendering="crispEdges">
</g>
</svg>
</body></html>
